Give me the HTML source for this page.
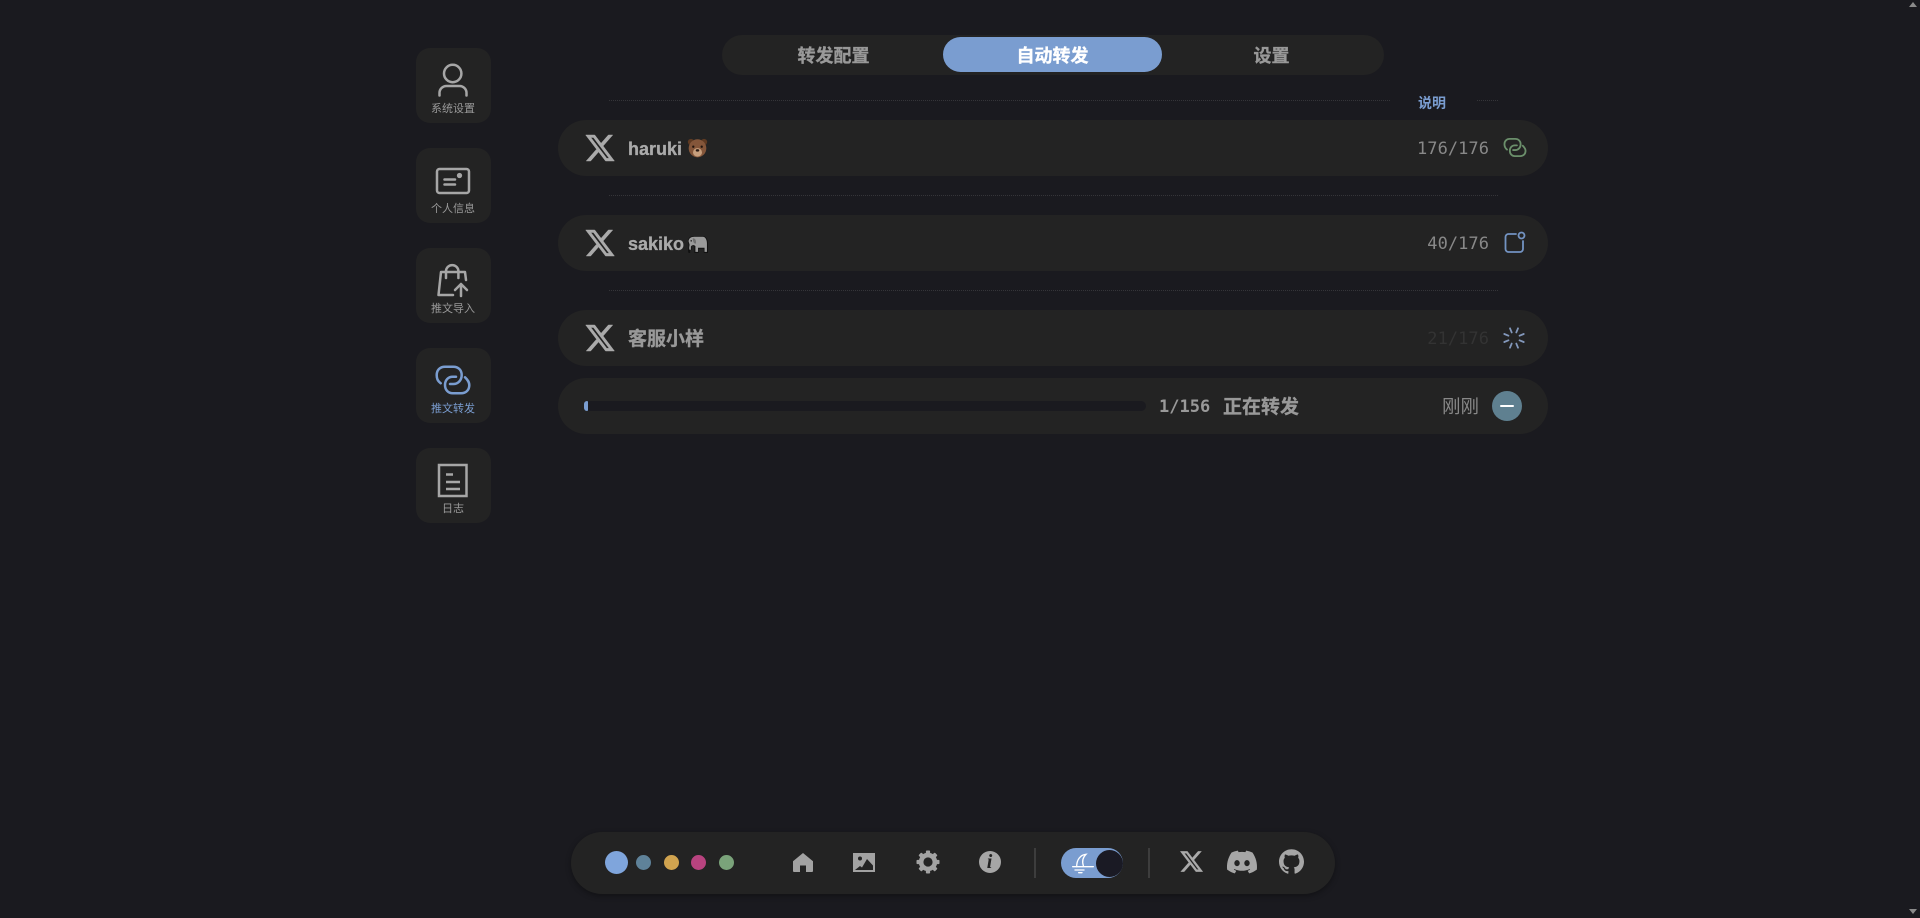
<!DOCTYPE html>
<html lang="zh">
<head>
<meta charset="utf-8">
<title>推文转发</title>
<style>
html,body{margin:0;padding:0;width:1920px;height:918px;overflow:hidden;background:#1a1a1f}
body{position:relative;font-family:"Liberation Sans","Noto Sans CJK SC",sans-serif;color:#999}
.a,.card,.side,.row,.tab,.t,svg{position:absolute}
svg{display:block;overflow:visible}
.side{left:416px;width:75px;height:75px;border-radius:14px;background:#232323}
.side span{position:absolute;left:-.5px;width:75px;top:53px;line-height:16px;font-size:11px;text-align:center;color:#999}
.row{left:558px;width:990px;height:56px;border-radius:28px;background:#232323}
.bar{position:absolute;left:722px;top:35px;width:662px;height:40px;border-radius:20px;background:#232323}
.tab{top:37px;width:219px;height:35px;line-height:38px;text-align:center;font-size:18px;font-weight:700;color:#999;border-radius:18px;-webkit-text-stroke:.35px currentColor}
.tab.on{background:#7a9dd0;color:#fff}
.hr{position:absolute;left:609px;width:889px;height:0;border-top:1px dotted #353539}
.name{position:absolute;left:628px;line-height:28px;font-size:18px;font-weight:700;color:#aaa;white-space:nowrap;-webkit-text-stroke:.3px currentColor}
.cn{font-size:19px;color:#999}
.cnt{position:absolute;right:431px;line-height:24px;font-family:"DejaVu Sans Mono","Liberation Mono",monospace;font-size:17px;letter-spacing:.05px;color:#888;white-space:nowrap}
.ic{fill:none;stroke:#a6a6a6;stroke-width:2.5;stroke-linecap:round;stroke-linejoin:round}
</style>
</head>
<body>
<svg width="0" height="0" style="position:absolute">
<defs>
<symbol id="x" viewBox="0 0 24 24"><path fill="#aaa" stroke="#aaa" stroke-width=".35" d="M18.244 2.25h3.308l-7.227 8.26 8.502 11.24H16.17l-5.214-6.817L4.99 21.75H1.68l7.73-8.835L1.254 2.25H8.08l4.713 6.231zm-1.161 17.52h1.833L7.084 4.126H5.117z"/></symbol>
</defs>
</svg>

<!-- scrollbar arrows -->
<svg style="left:1909px;top:2px" width="8" height="5"><path d="M4 0L8 5H0Z" fill="#8a8a8a"/></svg>
<svg style="left:1909px;top:909px" width="8" height="5"><path d="M0 0H8L4 5Z" fill="#8a8a8a"/></svg>

<!-- side nav -->
<div class="side" style="top:48px"><span>系统设置</span></div>
<div class="side" style="top:148px"><span>个人信息</span></div>
<div class="side" style="top:248px"><span>推文导入</span></div>
<div class="side" style="top:348px"><span style="color:#7a9dd0">推文转发</span></div>
<div class="side" style="top:448px"><span>日志</span></div>

<svg class="ic" style="left:0;top:0" width="1" height="1">
<circle cx="452.7" cy="73.5" r="8.7"/>
<path d="M439.5 95.5v-2.5a7 7 0 0 1 7-7h13a7 7 0 0 1 7 7v2.5"/>
<rect x="437" y="169" width="32" height="24" rx="2.5"/>
<path d="M444.5 179.5H455M444.5 184.5H455"/>
<circle cx="459.5" cy="175.5" r="1.4" fill="#a6a6a6"/>
<path d="M453 295H438.5L441 272H465L466 280"/>
<path d="M446 278V271.3a6.2 6.2 0 0 1 12.4 0V278"/>
<path d="M461 296V284M455 290L461 284L467 290"/>
<path stroke-linecap="butt" stroke-linejoin="miter" d="M439 465H466.5V496H439Z"/>
<path stroke-linecap="butt" d="M446 474.5H453M446 482H460M446 489H460" />
</svg>
<svg class="ic" style="left:430px;top:360px;stroke:#7a9dd0" width="46" height="40" viewBox="0 0 46 40">
<path d="M10.7 23.3C7.3 20.7 6.7 18.3 6.7 15C6.7 10 10 6.7 15 6.7H23.3C28.3 6.7 31.7 10 31.7 15C31.7 20 28.3 24 23.3 24H20"/>
<path d="M35 17.3C37.7 20 39.3 22 39.3 25C39.3 30 36 33.3 31 33.3H22.7C18.3 33.3 15 30 15 25C15 20 18.3 16.7 22.7 16.7H26"/>
</svg>

<!-- tabs -->
<div class="bar"></div>
<div class="tab" style="left:724px">转发配置</div>
<div class="tab on" style="left:943px">自动转发</div>
<div class="tab" style="left:1162px">设置</div>

<!-- rules -->
<div class="hr" style="top:100px"></div>
<div class="a" style="left:1391px;top:90px;width:85px;height:22px;background:#1a1a1f"></div>
<div class="a" style="left:1417px;top:93px;width:30px;line-height:20px;font-size:14px;font-weight:700;color:#7a9dd0;text-align:center;white-space:nowrap">说明</div>
<div class="hr" style="top:195px"></div>
<div class="hr" style="top:290px"></div>

<!-- rows -->
<div class="row" style="top:120px"></div>
<div class="row" style="top:215px"></div>
<div class="row" style="top:310px"></div>
<div class="row" style="top:378px"></div>

<svg style="left:583.5px;top:132px" width="32" height="32"><use href="#x"/></svg>
<svg style="left:583.5px;top:227px" width="32" height="32"><use href="#x"/></svg>
<svg style="left:583.5px;top:322px" width="32" height="32"><use href="#x"/></svg>

<div class="name" style="top:135px">haruki</div>
<svg style="left:687px;top:138px" width="21" height="21" viewBox="0 0 20 20"><title>🐻</title>
<circle cx="3.8" cy="3.8" r="3" fill="#5f3a22"/><circle cx="16.2" cy="3.8" r="3" fill="#5f3a22"/>
<ellipse cx="10" cy="9.8" rx="8.4" ry="8.6" fill="#84563a"/>
<ellipse cx="10" cy="13.7" rx="4.3" ry="4" fill="#c79f7d"/>
<ellipse cx="10" cy="11.8" rx="1.7" ry="1.2" fill="#2a1a12"/>
<circle cx="6" cy="8.3" r="1.1" fill="#20140e"/><circle cx="14" cy="8.3" r="1.1" fill="#20140e"/>
</svg>
<div class="name" style="top:230px">sakiko</div>
<svg style="left:687px;top:233px" width="21" height="21" viewBox="0 0 20 20"><title>🐘</title>
<path fill="#111" d="M1 7.5C1 4 4 3 7 3H15C18 3 20 6 20 10V19H16V15H11V19H7V13C6 12 5 12 4.5 13V16H3V19H1.5C.5 17 1.5 14 1.5 12Z"/>
<path fill="#9a9a9a" d="M1.5 8C1.5 5 4 3.6 7 3.6H15C17.5 3.6 19 6.5 19 10V18H16.7V14H10.5V18H8V12.5C6.5 11 4.5 11.5 3.7 13V16H2.4C1.6 14 2.5 12.5 2.4 11Z"/>
<path fill="#6f6f6f" d="M5.5 5C7.8 5 9 7 8.5 10C7 10.5 5.5 9 5.5 5Z"/>
<circle cx="4" cy="7.5" r=".7" fill="#111"/>
</svg>
<div class="name cn" style="top:326px">客服小样</div>

<div class="cnt" style="top:137px">176/176</div>
<div class="cnt" style="top:232px">40/176</div>
<div class="cnt" style="top:327px;color:#333">21/176</div>

<svg class="ic" style="left:1504px;top:138px;stroke:#6b8f6b;stroke-width:2.8" width="22" height="19" viewBox="6 6 34 28">
<path d="M10.7 23.3C7.3 20.7 6.7 18.3 6.7 15C6.7 10 10 6.7 15 6.7H23.3C28.3 6.7 31.7 10 31.7 15C31.7 20 28.3 24 23.3 24H20"/>
<path d="M35 17.3C37.7 20 39.3 22 39.3 25C39.3 30 36 33.3 31 33.3H22.7C18.3 33.3 15 30 15 25C15 20 18.3 16.7 22.7 16.7H26"/>
</svg>
<svg class="ic" style="left:1504px;top:231px;stroke:#7393c2;stroke-width:1.8" width="22" height="22" viewBox="0 0 22 22">
<path d="M12 3H4.5A3 3 0 0 0 1.5 6V18A3 3 0 0 0 4.5 21H16A3 3 0 0 0 19 18V10"/>
<circle cx="17.5" cy="4.5" r="3"/>
</svg>
<svg style="left:1502px;top:326px" width="24" height="24" viewBox="-12 -12 24 24" fill="none" stroke-width="1.8" stroke-linecap="round">
<g stroke="#8398bb">
<path d="M0-10.5V-6" transform="rotate(22.5)"/><path d="M0-10.5V-6" transform="rotate(67.5)"/>
<path d="M0-10.5V-6" transform="rotate(112.5)"/><path d="M0-10.5V-6" transform="rotate(157.5)"/>
<path d="M0-10.5V-6" transform="rotate(202.5)"/><path d="M0-10.5V-6" transform="rotate(247.5)"/>
<path d="M0-10.5V-6" transform="rotate(292.5)"/><path d="M0-10.5V-6" transform="rotate(337.5)"/>
</g>
</svg>

<!-- progress row -->
<div class="a" style="left:584px;top:401px;width:562px;height:10px;border-radius:5px;background:#1a1a1f"></div>
<div class="a" style="left:584px;top:401px;width:4px;height:10px;border-radius:3px 1px 1px 3px;background:#7a9dd0"></div>
<div class="a" style="left:1159px;top:395px;line-height:24px;font-family:'DejaVu Sans Mono','Liberation Mono',monospace;font-size:17px;font-weight:700;color:#999;white-space:nowrap">1/156</div>
<div class="a" style="left:1223px;top:394px;line-height:28px;font-size:19px;font-weight:700;color:#999;white-space:nowrap;-webkit-text-stroke:.3px currentColor">正在转发</div>
<div class="a" style="left:1442px;top:393px;line-height:28px;font-size:18.5px;color:#888;white-space:nowrap">刚刚</div>
<div class="a" style="left:1492px;top:391px;width:30px;height:30px;border-radius:50%;background:#5f8090"></div>
<div class="a" style="left:1500px;top:405px;width:14px;height:2px;background:#fff;border-radius:1px"></div>

<!-- bottom bar -->
<div class="a" style="left:571px;top:832px;width:764px;height:62px;border-radius:31px;background:#232323;box-shadow:0 2px 6px rgba(0,0,0,.35)"></div>
<div class="a" style="left:604.5px;top:851px;width:23px;height:23px;border-radius:50%;background:#7fa5dc"></div>
<div class="a" style="left:636px;top:855px;width:15px;height:15px;border-radius:50%;background:#5f8299"></div>
<div class="a" style="left:664px;top:855px;width:15px;height:15px;border-radius:50%;background:#d0a34f"></div>
<div class="a" style="left:691px;top:855px;width:15px;height:15px;border-radius:50%;background:#b8437f"></div>
<div class="a" style="left:719px;top:855px;width:15px;height:15px;border-radius:50%;background:#7aa37a"></div>

<svg style="left:793px;top:853px" width="20" height="19" viewBox="0 0 20 19"><path fill="#a2a2a2" d="M10 0L20 8.2V18a1 1 0 0 1-1 1H13V12.5H7V19H1a1 1 0 0 1-1-1V8.2Z"/></svg>
<svg style="left:853px;top:853px" width="22" height="19" viewBox="0 0 22 19"><rect width="22" height="19" fill="#a2a2a2"/><circle cx="7" cy="5.5" r="2" fill="#232323"/><path fill="#232323" d="M2 17L7 13L9 14.5L14 6L20 12.5V17Z"/></svg>
<svg style="left:916px;top:850px" width="24" height="24" viewBox="-12 -12 24 24">
<circle r="7" fill="none" stroke="#a2a2a2" stroke-width="4.4"/>
<g fill="#a2a2a2"><rect x="-2.1" y="-11.5" width="4.2" height="23" rx=".9"/><rect x="-2.1" y="-11.5" width="4.2" height="23" rx=".9" transform="rotate(45)"/><rect x="-2.1" y="-11.5" width="4.2" height="23" rx=".9" transform="rotate(90)"/><rect x="-2.1" y="-11.5" width="4.2" height="23" rx=".9" transform="rotate(135)"/></g>
<circle r="4.6" fill="#232323"/>
</svg>
<div class="a" style="left:978.5px;top:851px;width:22px;height:22px;border-radius:50%;background:#a6a6a6;color:#232323;font:italic 700 20px/22px 'Liberation Serif',serif;text-align:center">i</div>

<div class="a" style="left:1034px;top:848px;width:2px;height:30px;background:#3d3d3d"></div>
<div class="a" style="left:1148px;top:848px;width:2px;height:30px;background:#3d3d3d"></div>

<div class="a" style="left:1061px;top:848px;width:62px;height:30px;border-radius:15px;background:#7a9dd0"></div>
<div class="a" style="left:1095.5px;top:849.5px;width:27px;height:27px;border-radius:50%;background:#1a1a24"></div>
<svg style="left:1060px;top:845px" width="40" height="36" viewBox="0 0 120 108" fill="none" stroke="#fff" stroke-width="4" stroke-linecap="round">
<path d="M50 65C50 45 60 30 78 28C68 38 66 50 70 62"/>
<path d="M38 65H100M45 75H72M56 83H66"/>
</svg>

<svg style="left:1179px;top:849px" width="25" height="25" viewBox="0 0 24 24"><use href="#x" width="24" height="24"/></svg>
<svg style="left:1227px;top:847px" width="30" height="30" viewBox="0 0 24 24"><path fill="#a6a6a6" d="M20.317 4.3698a19.7913 19.7913 0 00-4.8851-1.5152.0741.0741 0 00-.0785.0371c-.211.3753-.4447.8648-.6083 1.2495-1.8447-.2762-3.68-.2762-5.4868 0-.1636-.3933-.4058-.8742-.6177-1.2495a.077.077 0 00-.0785-.037 19.7363 19.7363 0 00-4.8852 1.515.0699.0699 0 00-.0321.0277C.5334 9.0458-.319 13.5799.0992 18.0578a.0824.0824 0 00.0312.0561c2.0528 1.5076 4.0413 2.4228 5.9929 3.0294a.0777.0777 0 00.0842-.0276c.4616-.6304.8731-1.2952 1.226-1.9942a.076.076 0 00-.0416-.1057c-.6528-.2476-1.2743-.5495-1.8722-.8923a.077.077 0 01-.0076-.1277c.1258-.0943.2517-.1923.3718-.2914a.0743.0743 0 01.0776-.0105c3.9278 1.7933 8.18 1.7933 12.0614 0a.0739.0739 0 01.0785.0095c.1202.099.246.1981.3728.2924a.077.077 0 01-.0066.1276 12.2986 12.2986 0 01-1.873.8914.0766.0766 0 00-.0407.1067c.3604.698.7719 1.3628 1.225 1.9932a.076.076 0 00.0842.0286c1.961-.6067 3.9495-1.5219 6.0023-3.0294a.077.077 0 00.0313-.0552c.5004-5.177-.8382-9.6739-3.5485-13.6604a.061.061 0 00-.0312-.0286zM8.02 15.3312c-1.1825 0-2.1569-1.0857-2.1569-2.419 0-1.3332.9555-2.4189 2.157-2.4189 1.2108 0 2.1757 1.0952 2.1568 2.419 0 1.3332-.9555 2.4189-2.1569 2.4189zm7.9748 0c-1.1825 0-2.1569-1.0857-2.1569-2.419 0-1.3332.9554-2.4189 2.1569-2.4189 1.2108 0 2.1757 1.0952 2.1568 2.419 0 1.3332-.946 2.4189-2.1568 2.4189Z"/></svg>
<svg style="left:1279px;top:849px" width="25" height="25" viewBox="0 0 24 24"><path fill="#a6a6a6" d="M12 .297c-6.63 0-12 5.373-12 12 0 5.303 3.438 9.8 8.205 11.385.6.113.82-.258.82-.577 0-.285-.01-1.04-.015-2.04-3.338.724-4.042-1.61-4.042-1.61C4.422 18.07 3.633 17.7 3.633 17.7c-1.087-.744.084-.729.084-.729 1.205.084 1.838 1.236 1.838 1.236 1.07 1.835 2.809 1.305 3.495.998.108-.776.417-1.305.76-1.605-2.665-.3-5.466-1.332-5.466-5.93 0-1.31.465-2.38 1.235-3.22-.135-.303-.54-1.523.105-3.176 0 0 1.005-.322 3.3 1.23.96-.267 1.98-.399 3-.405 1.02.006 2.04.138 3 .405 2.28-1.552 3.285-1.23 3.285-1.23.645 1.653.24 2.873.12 3.176.765.84 1.23 1.91 1.23 3.22 0 4.61-2.805 5.625-5.475 5.92.42.36.81 1.096.81 2.22 0 1.606-.015 2.896-.015 3.286 0 .315.21.69.825.57C20.565 22.092 24 17.592 24 12.297c0-6.627-5.373-12-12-12"/></svg>
</body>
</html>
